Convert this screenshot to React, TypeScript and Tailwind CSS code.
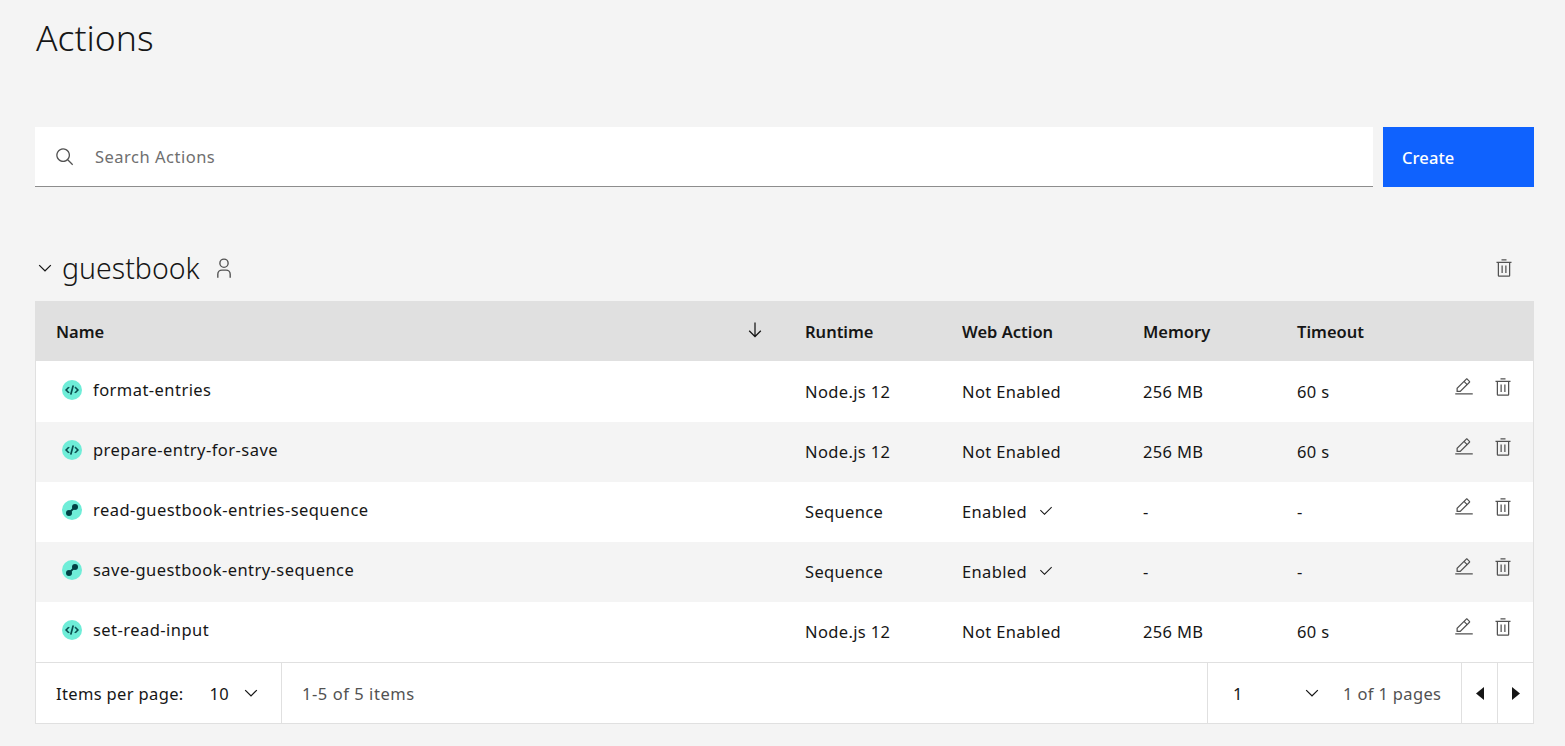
const font = { fontFamily: '"Noto Sans", "Open Sans", sans-serif' };

function Icon({ d, size = 16, className = "" }: { d: string; size?: number; className?: string }) {
  return (
    <svg width={size} height={size} viewBox="0 0 32 32" fill="currentColor" className={`shrink-0 ${className}`}>
      <path d={d} />
    </svg>
  );
}

const TRASH = "M12 12H14V24H12zM18 12H20V24H18zM4 6V8H6V28a2 2 0 002 2H24a2 2 0 002-2V8h2V6zM8 28V8H24V28zM12 2H20V4H12z";
const EDIT = "M2 26H30V28H2zM25.4 9c.8-.8.8-2 0-2.8l-3.6-3.6c-.8-.8-2-.8-2.8 0l-15 15V24h6.4L25.4 9zM20.4 4L24 7.6l-3 3L17.4 7 20.4 4zM6 22v-3.6l10-10 3.6 3.6-10 10H6z";
const USER = "M16 4a5 5 0 11-5 5 5 5 0 015-5m0-2a7 7 0 107 7A7 7 0 0016 2zM26 30H24V25a5 5 0 00-5-5H13a5 5 0 00-5 5v5H6V25a7 7 0 017-7h6a7 7 0 017 7z";
const SEARCH = "M29 27.5859l-7.5521-7.5521a11.0177 11.0177 0 10-1.4141 1.4141L27.5859 29zM4 13a9 9 0 119 9A9.01 9.01 0 014 13z";
const ARROW = "M24.59 16.59L17 24.17V4H15V24.17L7.41 16.59 6 18 16 28 26 18z";
const CHEVRON = "M16 22L6 12l1.4-1.4 8.6 8.6 8.6-8.6L26 12z";
const CHECK = "M13 24L4 15 5.414 13.586 13 21.171 26.586 7.586 28 9 13 24z";
const CODE = "M31 16L24 23 22.59 21.59 28.17 16 22.59 10.41 24 9 31 16zM1 16L8 9 9.41 10.41 3.83 16 9.41 21.59 8 23 1 16zM12.419 25.484L17.639 6 19.571 6.518 14.351 26 12.419 25.484z";

function KindIcon({ kind }: { kind: "code" | "seq" }) {
  return (
    <span className="flex h-5 w-5 shrink-0 items-center justify-center rounded-full bg-[#6fedd8] text-[#004144]">
      {kind === "code" ? (
        <svg width="14" height="14" viewBox="0 0 32 32" fill="currentColor" stroke="currentColor" strokeWidth="1.6">
          <path d={CODE} />
        </svg>
      ) : (
        <svg width="14" height="14" viewBox="0 0 14 14" fill="currentColor">
          <circle cx="4" cy="10" r="3" />
          <circle cx="10" cy="4" r="3" />
          <path d="M3.4 9.2L9.2 3.4l1.4 1.4-5.8 5.8z" />
        </svg>
      )}
    </span>
  );
}

const rows = [
  { name: "format-entries", kind: "code", runtime: "Node.js 12", web: "Not Enabled", mem: "256 MB", time: "60 s" },
  { name: "prepare-entry-for-save", kind: "code", runtime: "Node.js 12", web: "Not Enabled", mem: "256 MB", time: "60 s" },
  { name: "read-guestbook-entries-sequence", kind: "seq", runtime: "Sequence", web: "Enabled", mem: "-", time: "-" },
  { name: "save-guestbook-entry-sequence", kind: "seq", runtime: "Sequence", web: "Enabled", mem: "-", time: "-" },
  { name: "set-read-input", kind: "code", runtime: "Node.js 12", web: "Not Enabled", mem: "256 MB", time: "60 s" },
] as const;

const cols = "grid grid-cols-[769px_157px_181px_154px_143px_94px] items-center";

export default function App() {
  return (
    <div style={font} className="min-h-[746px] bg-[#f4f4f4] pl-[35px] pr-[31px] text-[#161616]">
      <h1 className="pl-[1px] pt-[15px] text-[35.5px] font-light leading-[44px]">Actions</h1>

      <div className="mt-[68px] flex h-[60px] gap-[10px]">
        <div className="flex flex-1 items-center border-b border-[#8d8d8d] bg-white pl-[20px]">
          <Icon d={SEARCH} size={20} className="text-[#525252]" />
          <span className="ml-[20px] pt-[1px] text-[16.5px] tracking-[0.5px] text-[#6f6f6f]">Search Actions</span>
        </div>
        <div className="flex w-[151px] items-center bg-[#0f62fe] pl-[19px] pt-[2px] text-[16.5px] font-medium tracking-[0.1px] text-white">Create</div>
      </div>

      <div className="mt-[57px] flex h-[57px] items-start">
        <div className="flex h-[48px] flex-1 items-center">
          <Icon d={CHEVRON} size={20} />
          <span className="ml-[7px] text-[28.5px] font-light leading-[40px]">guestbook</span>
          <Icon d={USER} size={22} className="ml-[13px] text-[#525252]" />
        </div>
        <div className="flex h-[48px] items-center pr-[20px] text-[#525252]">
          <Icon d={TRASH} size={20} />
        </div>
      </div>

      <div className="border-x border-b border-[#e0e0e0]">
        <div className={`${cols} h-[60px] bg-[#e0e0e0] pt-[2px] text-[16.5px] font-semibold`}>
          <div className="flex items-center justify-between pl-[20px] pr-[40px]">
            <span>Name</span>
            <Icon d={ARROW} size={20} className="mb-[4px]" />
          </div>
          <div>Runtime</div>
          <div>Web Action</div>
          <div>Memory</div>
          <div>Timeout</div>
          <div />
        </div>

        {rows.map((r, i) => (
          <div
            key={r.name}
            className={`${cols} text-[16.5px] tracking-[0.35px] ${i === 0 ? "h-[61px] pt-[1px]" : "h-[60px]"} ${i % 2 ? "bg-[#f4f4f4]" : "bg-white"}`}
          >
            <div className="mb-[4px] flex items-center gap-[11px] pl-[26px]">
              <KindIcon kind={r.kind} />
              <span className="tracking-[0.45px]">{r.name}</span>
            </div>
            <div>{r.runtime}</div>
            <div className="flex items-center gap-[11px]">
              <span>{r.web}</span>
              {r.web === "Enabled" && <Icon d={CHECK} size={16} className="mb-[3px]" />}
            </div>
            <div>{r.mem}</div>
            <div>{r.time}</div>
            <div className="mb-[10px] flex items-center gap-[19px] pl-[14px] text-[#525252]">
              <Icon d={EDIT} size={20} />
              <Icon d={TRASH} size={20} />
            </div>
          </div>
        ))}

        <div className="flex h-[61px] items-stretch border-t border-[#e0e0e0] bg-white text-[16.5px] tracking-[0.35px]">
          <div className="flex w-[246px] items-center border-r border-[#e0e0e0] pl-[20px] pt-[2px]">
            <span>Items per page:</span>
            <span className="ml-[26px]">10</span>
            <Icon d={CHEVRON} size={20} className="mb-[3px] ml-[12px]" />
          </div>
          <div className="flex flex-1 items-center pl-[20px] pt-[2px] tracking-[0.55px] text-[#525252]">1-5 of 5 items</div>
          <div className="flex w-[254px] items-center border-l border-[#e0e0e0] pl-[25px] pt-[2px] text-[#525252]">
            <span className="w-[9px] text-[#161616]">1</span>
            <Icon d={CHEVRON} size={20} className="mb-[3px] ml-[60px] text-[#161616]" />
            <span className="ml-[21px]">1 of 1 pages</span>
          </div>
          <div className="flex w-[36px] items-center justify-center border-l border-[#e0e0e0]">
            <svg width="8" height="13" viewBox="0 0 8 13" fill="currentColor"><path d="M8 0V13L0 6.5z" /></svg>
          </div>
          <div className="flex w-[36px] items-center justify-center border-l border-[#e0e0e0]">
            <svg width="8" height="13" viewBox="0 0 8 13" fill="currentColor"><path d="M0 0V13L8 6.5z" /></svg>
          </div>
        </div>
      </div>
    </div>
  );
}
